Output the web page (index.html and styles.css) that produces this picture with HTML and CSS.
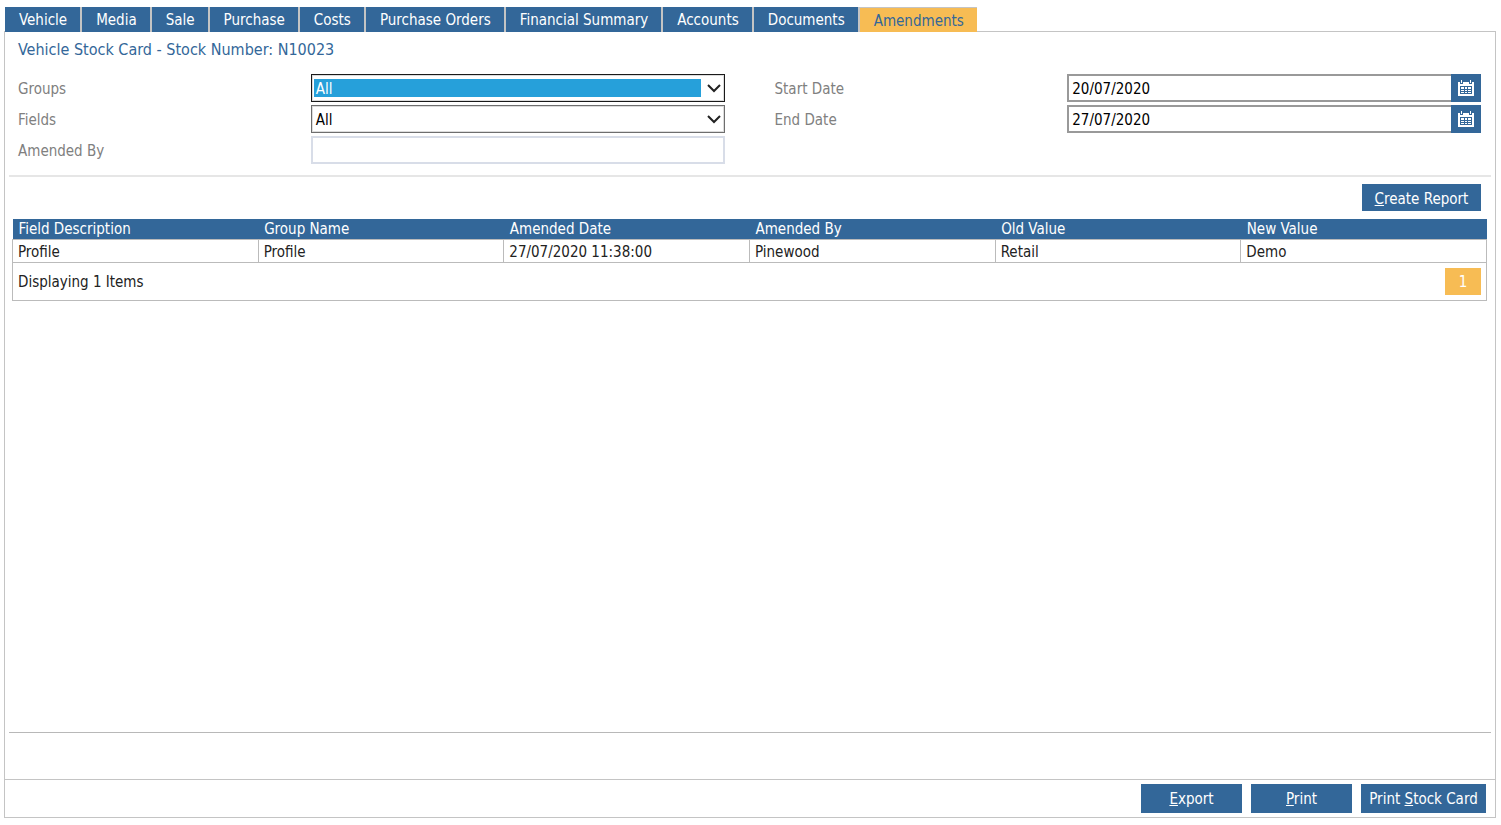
FILE: index.html
```html
<!doctype html>
<html lang="en">
  <head>
    <title>Vehicle Stock Card</title>
    <meta charset="UTF-8">
    <link rel="stylesheet" href="styles.css">
  </head>
  <body>
    <nav class="tabs">
      <a href="#vehicle">Vehicle</a>
      <a href="#media">Media</a>
      <a href="#sale">Sale</a>
      <a href="#purchase">Purchase</a>
      <a href="#costs">Costs</a>
      <a href="#orders">Purchase Orders</a>
      <a href="#summary">Financial Summary</a>
      <a href="#accounts">Accounts</a>
      <a href="#documents">Documents</a>
      <a href="#amendments" class="active">Amendments</a>
    </nav>

    <main class="panel">
      <h1>Vehicle Stock Card - Stock Number: N10023</h1>

      <form class="filters">
        <div class="filterColumn">
          <div class="field">
            <label for="groups">Groups</label>
            <div class="selectWrapper">
              <select id="groups" class="selected"><option>All</option></select>
              <svg class="arrow" viewBox="0 0 14 9"><path d="M1 1 L7 7 L13 1"/></svg>
            </div>
          </div>
          <div class="field">
            <label for="fields">Fields</label>
            <div class="selectWrapper">
              <select id="fields"><option>All</option></select>
              <svg class="arrow" viewBox="0 0 14 9"><path d="M1 1 L7 7 L13 1"/></svg>
            </div>
          </div>
          <div class="field">
            <label for="amended-by">Amended By</label>
            <input type="text" id="amended-by" class="plain">
          </div>
        </div>
        <div class="filterColumn">
          <div class="field">
            <label for="start-date">Start Date</label>
            <div class="dateWrapper">
              <input type="text" id="start-date" value="20/07/2020">
              <button type="button" class="calendar" aria-label="Pick start date">
                <svg viewBox="0 0 16 16">
                  <path class="solid" d="M0 2h16v14H0z"/>
                  <path class="hole" d="M2 6h12v8H2z M2 1h3v3H2z M11 1h3v3h-3z"/>
                  <path class="solid" d="M3 0h1v3H3z M12 0h1v3h-1z M3 7h3v2H3z M7 7h2v2H7z M10 7h3v2h-3z M3 10h3v1H3z M7 10h2v1H7z M10 10h3v1h-3z M3 12h3v1H3z M7 12h2v1H7z M10 12h3v1h-3z"/>
                </svg>
              </button>
            </div>
          </div>
          <div class="field">
            <label for="end-date">End Date</label>
            <div class="dateWrapper">
              <input type="text" id="end-date" value="27/07/2020">
              <button type="button" class="calendar" aria-label="Pick end date">
                <svg viewBox="0 0 16 16">
                  <path class="solid" d="M0 2h16v14H0z"/>
                  <path class="hole" d="M2 6h12v8H2z M2 1h3v3H2z M11 1h3v3h-3z"/>
                  <path class="solid" d="M3 0h1v3H3z M12 0h1v3h-1z M3 7h3v2H3z M7 7h2v2H7z M10 7h3v2h-3z M3 10h3v1H3z M7 10h2v1H7z M10 10h3v1h-3z M3 12h3v1H3z M7 12h2v1H7z M10 12h3v1h-3z"/>
                </svg>
              </button>
            </div>
          </div>
        </div>
      </form>

      <div class="report">
        <button type="button" class="btn create"><u>C</u>reate Report</button>
      </div>

      <div class="resultsWrapper">
        <table class="results">
          <thead>
            <tr>
              <th>Field Description</th>
              <th>Group Name</th>
              <th>Amended Date</th>
              <th>Amended By</th>
              <th>Old Value</th>
              <th>New Value</th>
            </tr>
          </thead>
          <tbody>
            <tr>
              <td>Profile</td>
              <td>Profile</td>
              <td>27/07/2020 11:38:00</td>
              <td>Pinewood</td>
              <td>Retail</td>
              <td>Demo</td>
            </tr>
          </tbody>
          <tfoot>
            <tr>
              <td colspan="6">
                <div class="pager">
                  <span>Displaying 1 Items</span>
                  <button type="button" class="page">1</button>
                </div>
              </td>
            </tr>
          </tfoot>
        </table>
      </div>

      <div class="messages"></div>

      <footer class="actions">
        <button type="button" class="btn"><u>E</u>xport</button>
        <button type="button" class="btn"><u>P</u>rint</button>
        <button type="button" class="btn wide">Print <u>S</u>tock Card</button>
      </footer>
    </main>
  </body>
</html>
```
FILE: styles.css
```css
* {
  box-sizing: border-box;
}

body {
  display: flex;
  flex-direction: column;
  min-height: 100vh;
  margin: 0;
  padding: 7px 5px 7px 4px;
  background: #fff;
  color: #222;
  font: 15px/20px Tahoma, "DejaVu Sans Condensed", "Noto Sans", sans-serif;
}

button, input, select {
  font: inherit;
}

.tabs {
  display: flex;
  gap: 2px;
  padding-left: 1px;
}

.tabs a {
  position: relative;
  z-index: 1;
  height: 25px;
  padding: 0 13px 0 14px;
  background: #336799;
  box-shadow: -2px 0 #c4c4c4;
  color: #fff;
  line-height: 27px;
  text-decoration: none;
  white-space: nowrap;
}

.tabs a:first-child {
  box-shadow: none;
}

.tabs a.active {
  background: #f7bc54;
  border-top: 1px solid #c4c4c4;
  color: #336799;
}

.panel {
  flex: 1;
  display: flex;
  flex-direction: column;
  margin-top: -1px;
  border: 1px solid #c4c4c4;
}

h1 {
  margin: 7px 13px 14px;
  color: #336799;
  font-size: 16px;
  font-weight: normal;
  line-height: 21px;
}

.filters {
  display: flex;
  gap: 50px;
  margin: 0 4px;
  padding: 0 10px 11px 9px;
  border-bottom: 2px solid #e6e6e6;
}

.filterColumn {
  flex: 1;
  display: flex;
  flex-direction: column;
  gap: 3px;
}

.field {
  display: grid;
  grid-template-columns: 293fr 414fr;
  align-items: center;
  height: 28px;
}

.field label {
  padding-top: 2px;
  color: #808080;
}

.field input, .field select {
  width: 100%;
  height: 28px;
  margin: 0;
  padding: 2px 3px 0;
  border: 1px solid #6e6e6e;
  border-radius: 0;
  background: #fff;
  color: #000;
}

.field .plain {
  border: 2px solid #d8dde8;
}

.selectWrapper {
  position: relative;
}

.field select {
  display: block;
  appearance: none;
  padding: 4px 23px 4px 2px;
  box-shadow: inset 0 0 0 1px #dcdcdc;
  line-height: 20px;
  text-indent: 2px;
}

.field .selected {
  border-color: #1a1a1a;
  background: #26a0da content-box;
  color: #fff;
}

.arrow {
  position: absolute;
  top: 10px;
  right: 4px;
  width: 14px;
  height: 9px;
  fill: none;
  stroke: #222;
  stroke-width: 2;
  pointer-events: none;
}

.dateWrapper {
  display: flex;
}

.dateWrapper input {
  flex: 1;
  border-width: 2px 0 2px 2px;
  border-color: #999;
}

.calendar {
  width: 30px;
  height: 28px;
  padding: 6px 7px;
  border: 0;
  background: #336799;
}

.calendar svg {
  display: block;
  width: 16px;
  height: 16px;
}

.solid {
  fill: #fff;
}

.hole {
  fill: #336799;
}

.btn {
  width: 101px;
  height: 29px;
  padding: 0;
  border: 0;
  background: #336799;
  color: #fff;
  white-space: nowrap;
}

.report {
  display: flex;
  justify-content: flex-end;
  padding: 7px 14px 8px;
}

.create {
  width: 119px;
  height: 27px;
  padding-top: 2px;
}

.resultsWrapper {
  padding: 0 8px 0 7px;
}

.results {
  width: 100%;
  border-collapse: collapse;
  table-layout: fixed;
}

.results th {
  height: 20px;
  padding: 1px 6px 0;
  background: #336799;
  color: #fff;
  font-weight: normal;
  line-height: 19px;
  text-align: left;
}

.results td {
  height: 23px;
  padding: 2px 5px 0;
  border: 1px solid #bbb;
}

.results tfoot td {
  padding-top: 0;
}

.pager {
  display: flex;
  align-items: center;
  justify-content: space-between;
  height: 37px;
}

.page {
  width: 36px;
  height: 27px;
  padding: 0;
  border: 0;
  background: #f7bc54;
  color: #fff;
}

.messages {
  height: 47px;
  margin: auto 4px 0;
  border-top: 1px solid #b8b8b8;
}

.actions {
  display: flex;
  justify-content: flex-end;
  gap: 9px;
  padding: 4px 9px;
  border-top: 1px solid #c4c4c4;
}

.wide {
  width: 125px;
}
```
